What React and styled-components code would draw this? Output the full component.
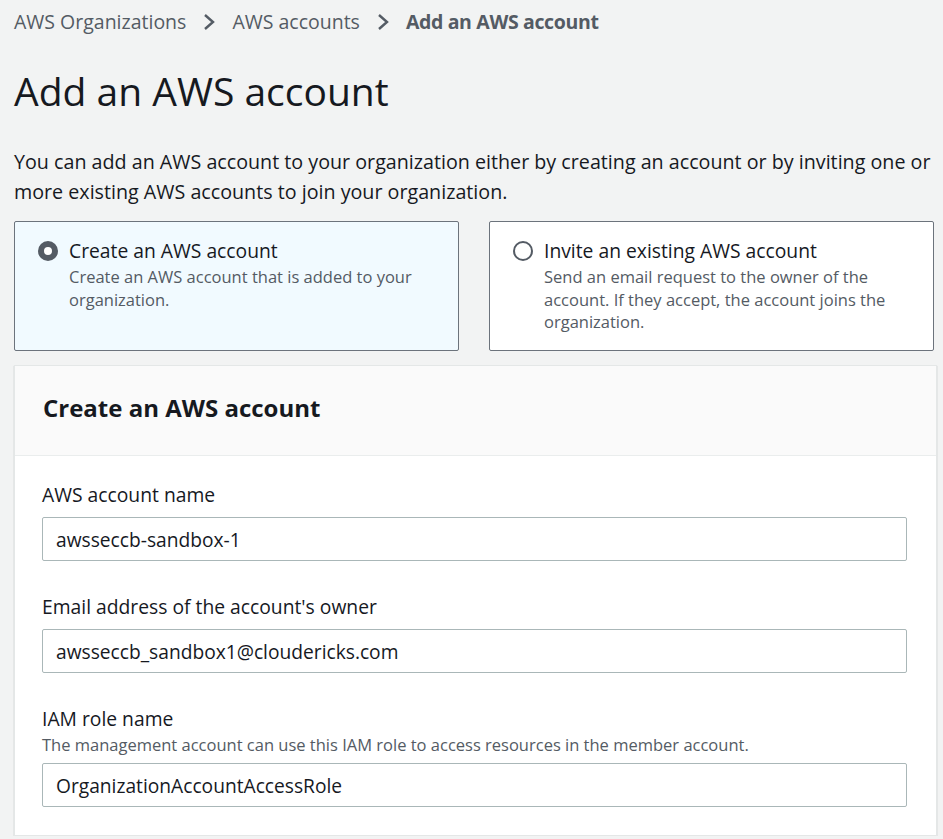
import styled, { createGlobalStyle } from "styled-components";

const GlobalStyle = createGlobalStyle`
    body {
        margin: 0;
        background: #f2f3f3;
        font-family: "Open Sans", "Noto Sans", Arial, sans-serif;
        color: #16191f;
    }
`

const Page = styled.div`
    padding: 10px 8px 0 14px;
    width: 921px;
`

const Crumbs = styled.nav`
    display: flex;
    align-items: center;
    font-size: 19.5px;
    line-height: 24px;
    color: #545b64;
`

const Crumb = styled.span`
    font-weight: ${p => (p.$current ? 700 : 400)};
    letter-spacing: ${p => (p.$current ? "-0.35px" : "0")};
`

const Chevron = styled.svg`
    width: 14px;
    height: 18px;
    margin: 0 16px 0 16px;
`

const Title = styled.h1`
    margin: 34px 0 0;
    font-size: 39px;
    line-height: 46px;
    font-weight: 400;
`

const Intro = styled.p`
    margin: 33px 0 0;
    font-size: 19.7px;
    line-height: 29.5px;
`

const Choices = styled.div`
    display: grid;
    grid-template-columns: 1fr 1fr;
    gap: 30px;
    margin-top: 15px;
    width: 920px;
`

const Choice = styled.label`
    display: flex;
    align-items: flex-start;
    gap: 11px;
    min-height: 130px;
    box-sizing: border-box;
    padding: 16px 20px 14px 23px;
    border: 1px solid #6c737c;
    border-radius: 2px;
    background: ${p => (p.$selected ? "#f1faff" : "#ffffff")};
`

const Radio = styled.span`
    flex: none;
    width: 20px;
    height: 20px;
    margin-top: 3px;
    box-sizing: border-box;
    border-radius: 50%;
    border: ${p => (p.$checked ? "6px solid #545b64" : "2px solid #545b64")};
    background: #fff;
`

const ChoiceTitle = styled.div`
    font-size: 19.3px;
    line-height: 26px;
`

const ChoiceDesc = styled.div`
    margin-top: 2px;
    font-size: 16.5px;
    line-height: 22.5px;
    color: #545b64;
`

const Container = styled.section`
    margin-top: 14px;
    width: 921px;
    background: #fff;
    border: 1px solid #e4e7e7;
    box-shadow: 0 1px 1px rgba(0, 28, 36, 0.3);
`

const Header = styled.div`
    padding: 26px 28px 31px;
    background: #fafafa;
    border-bottom: 1px solid #eaeded;
`

const HeaderTitle = styled.h2`
    margin: 0;
    font-size: 24px;
    line-height: 32px;
    font-weight: 700;
`

const Body = styled.div`
    display: flex;
    flex-direction: column;
    gap: 33px;
    padding: 26px 29px 28px 27px;
`

const Field = styled.div`
    display: flex;
    flex-direction: column;
`

const Label = styled.div`
    font-size: 19.3px;
    line-height: 26px;
    margin-bottom: ${p => (p.$tight ? "2px" : "9px")};
`

const Help = styled.div`
    font-size: 16.5px;
    line-height: 22px;
    color: #545b64;
    margin-bottom: 7px;
`

const Input = styled.div`
    height: 44px;
    box-sizing: border-box;
    display: flex;
    align-items: center;
    padding: 0 13px;
    border: 1px solid #aab7b8;
    border-radius: 2px;
    font-size: 19.2px;
    background: #fff;
`

const ChevronIcon = () => (
    <Chevron viewBox="0 0 14 18">
        <path d="M3 2 L11 9 L3 16" fill="none" stroke="#545b64" strokeWidth="2.4" strokeLinejoin="miter" />
    </Chevron>
)

const App = () => {
    return (
        <Page>
            <GlobalStyle />
            <Crumbs>
                <Crumb>AWS Organizations</Crumb>
                <ChevronIcon />
                <Crumb>AWS accounts</Crumb>
                <ChevronIcon />
                <Crumb $current>Add an AWS account</Crumb>
            </Crumbs>

            <Title>Add an AWS account</Title>
            <Intro>
                You can add an AWS account to your organization either by creating an account or by inviting one or
                more existing AWS accounts to join your organization.
            </Intro>

            <Choices>
                <Choice $selected>
                    <Radio $checked />
                    <div>
                        <ChoiceTitle>Create an AWS account</ChoiceTitle>
                        <ChoiceDesc>Create an AWS account that is added to your organization.</ChoiceDesc>
                    </div>
                </Choice>
                <Choice>
                    <Radio />
                    <div>
                        <ChoiceTitle>Invite an existing AWS account</ChoiceTitle>
                        <ChoiceDesc>
                            Send an email request to the owner of the account. If they accept, the account joins the
                            organization.
                        </ChoiceDesc>
                    </div>
                </Choice>
            </Choices>

            <Container>
                <Header>
                    <HeaderTitle>Create an AWS account</HeaderTitle>
                </Header>
                <Body>
                    <Field>
                        <Label>AWS account name</Label>
                        <Input>awsseccb-sandbox-1</Input>
                    </Field>
                    <Field>
                        <Label>Email address of the account's owner</Label>
                        <Input>awsseccb_sandbox1@cloudericks.com</Input>
                    </Field>
                    <Field>
                        <Label $tight>IAM role name</Label>
                        <Help>The management account can use this IAM role to access resources in the member account.</Help>
                        <Input>OrganizationAccountAccessRole</Input>
                    </Field>
                </Body>
            </Container>
        </Page>
    );
}

export default App;
